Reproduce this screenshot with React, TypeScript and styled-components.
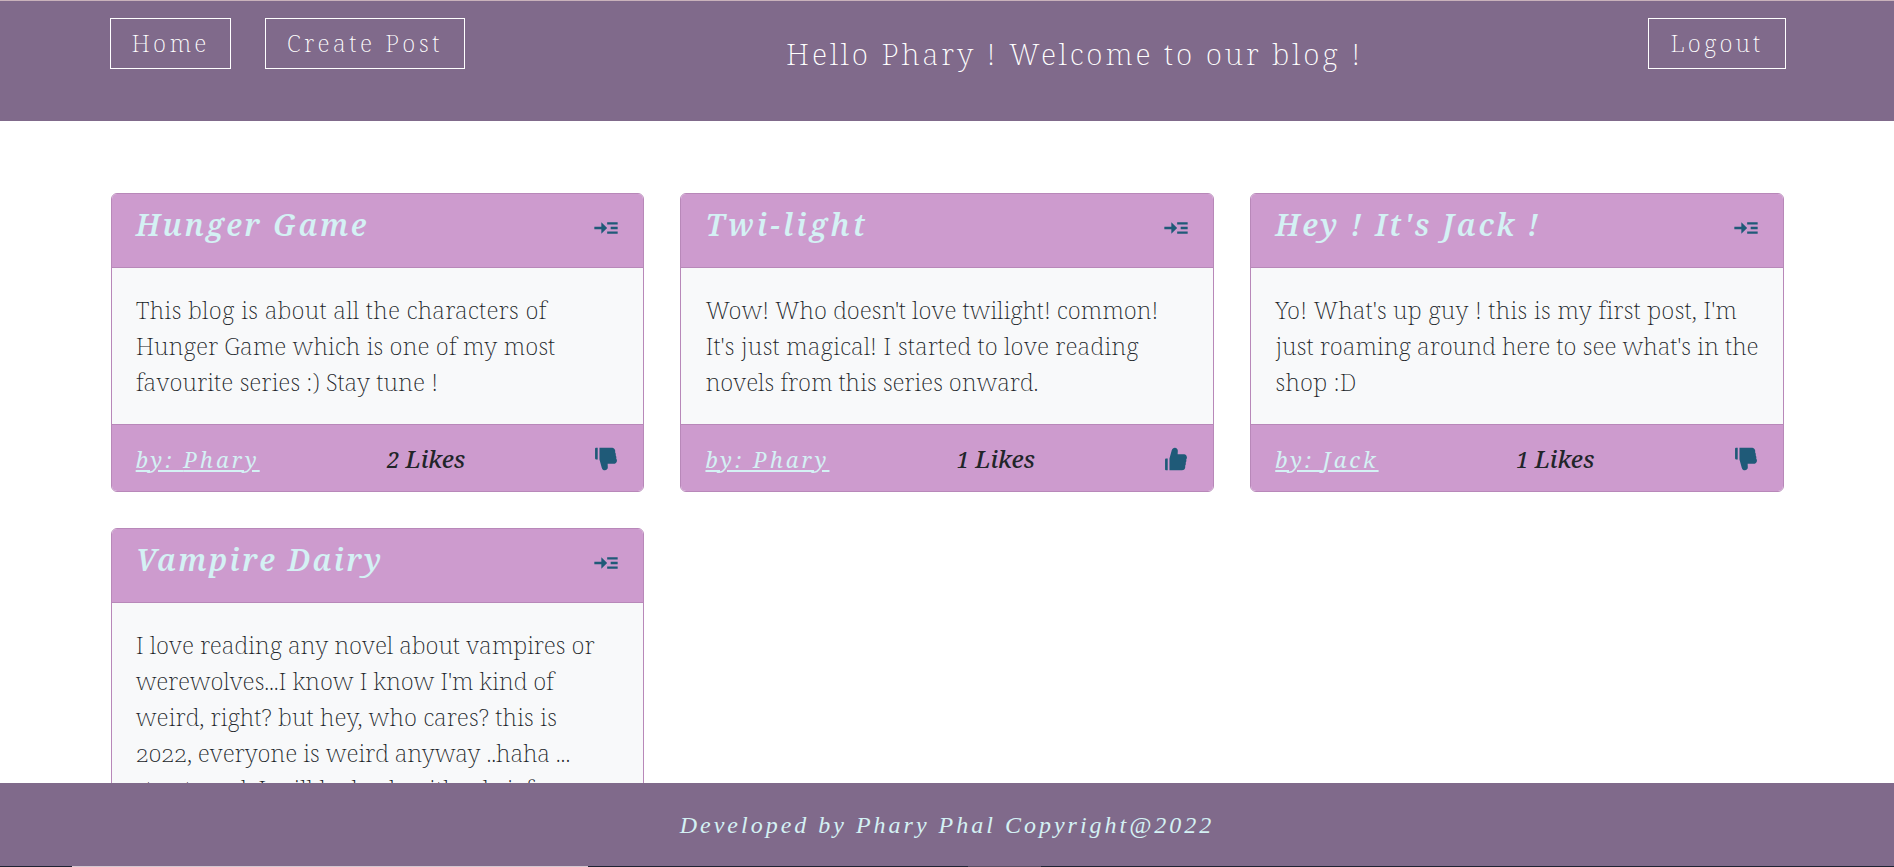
import React from "react";
import styled, { createGlobalStyle } from "styled-components";
import { MdReadMore } from "react-icons/md";
import { AiFillLike, AiFillDislike } from "react-icons/ai";

const GlobalStyle = createGlobalStyle`
  *, *::before, *::after { box-sizing: border-box; }
  body {
    margin: 0;
    background: #fff;
    color: #212529;
    font-family: "Noto Serif", "Liberation Serif", serif;
    font-size: 24px;
    line-height: 36px;
  }
  h1, h2, p { margin: 0; }
`;

const Page = styled.div`
  display: flex;
  flex-direction: column;
  height: 867px;
  overflow: hidden;
`;

const Header = styled.header`
  display: flex;
  justify-content: space-between;
  align-items: flex-start;
  flex: none;
  height: 121px;
  padding: 17px 108px 0 110px;
  border-top: 1px solid #c9b2bb;
  background: #806a8b;
`;

const NavGroup = styled.nav`
  display: flex;
  gap: 34px;
`;

const NavButton = styled.button<{ $width: number; $tracking: number }>`
  width: ${(p) => p.$width}px;
  height: 51px;
  padding: 0 0 2px;
  border: 1px solid #fff;
  background: transparent;
  color: #fff;
  font: 200 24px/36px "Noto Serif", "Liberation Serif", serif;
  letter-spacing: ${(p) => p.$tracking}px;
  white-space: nowrap;
`;

const Greeting = styled.h1`
  padding: 12px 0 0 36px;
  color: #fff;
  font-size: 30px;
  font-weight: 200;
  line-height: 48px;
  letter-spacing: 2.9px;
  white-space: nowrap;
`;

const Posts = styled.main`
  display: grid;
  grid-template-columns: repeat(3, 1fr);
  grid-auto-rows: max-content;
  align-items: start;
  gap: 36px;
  flex: 1;
  min-height: 0;
  overflow: hidden;
  padding: 72px 110px 0 110.67px;
`;

const Card = styled.article`
  border: 1px solid #b888b9;
  border-radius: 6px;
  background: #f8f9fa;
  overflow: hidden;
`;

const CardHeader = styled.div`
  display: flex;
  justify-content: space-between;
  height: 74px;
  padding: 12px 23px 0 24px;
  border-bottom: 1px solid #b888b9;
  background: #cd9bce;
`;

const Title = styled.h2<{ $tracking: number }>`
  color: #d4f1f4;
  font-size: 30px;
  font-style: italic;
  font-weight: 600;
  line-height: 38px;
  letter-spacing: ${(p) => p.$tracking}px;
`;

const OpenIcon = styled(MdReadMore)`
  flex: none;
  width: 28px;
  height: 28px;
  margin-top: 8px;
  color: #1f5a78;
`;

const CardBody = styled.p`
  padding: 24px;
  font-weight: 200;
  font-variant-numeric: oldstyle-nums;
`;

const Line = styled.span<{ $tracking: number }>`
  display: block;
  letter-spacing: ${(p) => p.$tracking}px;
  white-space: nowrap;
`;

const CardFooter = styled.div`
  display: flex;
  justify-content: space-between;
  align-items: center;
  height: 67px;
  padding: 1px 23px 0 24px;
  border-top: 1px solid #b888b9;
  background: #cd9bce;
`;

const Author = styled.span`
  color: #d4f1f4;
  font-size: 22px;
  font-style: italic;
  letter-spacing: 3px;
  text-decoration: underline;
`;

const Likes = styled.span`
  font-style: italic;
  font-weight: 500;
`;

const Count = styled.span`
  font-size: 22px;
`;

const Vote = styled.span`
  display: flex;
  padding-top: 1px;
  color: #1f5a78;
  font-size: 28px;
`;

const Footer = styled.footer`
  display: flex;
  justify-content: center;
  align-items: center;
  flex: none;
  height: 83px;
  background: #806a8b;
  color: #d4f1f4;
  font: italic 24px/36px "Liberation Serif", serif;
  letter-spacing: 3px;
`;

const Edge = styled.div`
  display: flex;
  flex: none;
  height: 1px;
  background: #1e2434;
`;

const EdgeSegment = styled.span<{ $start: number; $width: number; $color: string }>`
  width: ${(p) => p.$width}px;
  margin-left: ${(p) => p.$start}px;
  background: ${(p) => p.$color};
`;

type Post = {
  title: string;
  tracking: number;
  lines: [text: string, tracking: number][];
  author: string;
  likes: number;
  liked: boolean;
};

const posts: Post[] = [
  {
    title: "Hunger Game",
    tracking: 2.6,
    lines: [
      ["This blog is about all the characters of", 0.2],
      ["Hunger Game which is one of my most", 0],
      ["favourite series :) Stay tune !", 0],
    ],
    author: "Phary",
    likes: 2,
    liked: true,
  },
  {
    title: "Twi-light",
    tracking: 3.4,
    lines: [
      ["Wow! Who doesn't love twilight! common!", -0.1],
      ["It's just magical! I started to love reading", 0.07],
      ["novels from this series onward.", -0.13],
    ],
    author: "Phary",
    likes: 1,
    liked: false,
  },
  {
    title: "Hey ! It's Jack !",
    tracking: 2.7,
    lines: [
      ["Yo! What's up guy ! this is my first post, I'm", 0.12],
      ["just roaming around here to see what's in the", -0.06],
      ["shop :D", 0.2],
    ],
    author: "Jack",
    likes: 1,
    liked: true,
  },
  {
    title: "Vampire Dairy",
    tracking: 2.4,
    lines: [
      ["I love reading any novel about vampires or", -0.12],
      ["werewolves...I know I know I'm kind of", -0.17],
      ["weird, right? but hey, who cares? this is", 0],
      ["2022, everyone is weird anyway ..haha ...", -0.15],
      ["stay tuned, I will be back with a brief", 0],
    ],
    author: "Phary",
    likes: 1,
    liked: true,
  },
];

function PostCard({ post }: { post: Post }) {
  return (
    <Card>
      <CardHeader>
        <Title $tracking={post.tracking}>{post.title}</Title>
        <OpenIcon />
      </CardHeader>
      <CardBody>
        {post.lines.map(([text, tracking]) => (
          <Line key={text} $tracking={tracking}>
            {text}
          </Line>
        ))}
      </CardBody>
      <CardFooter>
        <Author>by: {post.author}</Author>
        <Likes>
          <Count>{post.likes}</Count> Likes
        </Likes>
        <Vote>{post.liked ? <AiFillDislike /> : <AiFillLike />}</Vote>
      </CardFooter>
    </Card>
  );
}

export default function App() {
  return (
    <>
      <GlobalStyle />
      <Page>
        <Header>
          <NavGroup>
            <NavButton $width={121} $tracking={3.3}>Home</NavButton>
            <NavButton $width={200} $tracking={3.5}>Create Post</NavButton>
          </NavGroup>
          <Greeting>Hello Phary ! Welcome to our blog !</Greeting>
          <NavButton $width={138} $tracking={3.1}>Logout</NavButton>
        </Header>
        <Posts>
          {posts.map((post) => (
            <PostCard key={post.title} post={post} />
          ))}
        </Posts>
        <Footer>Developed by Phary Phal Copyright@2022</Footer>
        <Edge>
          <EdgeSegment $start={72} $width={516} $color="#d5c8d0" />
          <EdgeSegment $start={380} $width={73} $color="#574f63" />
        </Edge>
      </Page>
    </>
  );
}
